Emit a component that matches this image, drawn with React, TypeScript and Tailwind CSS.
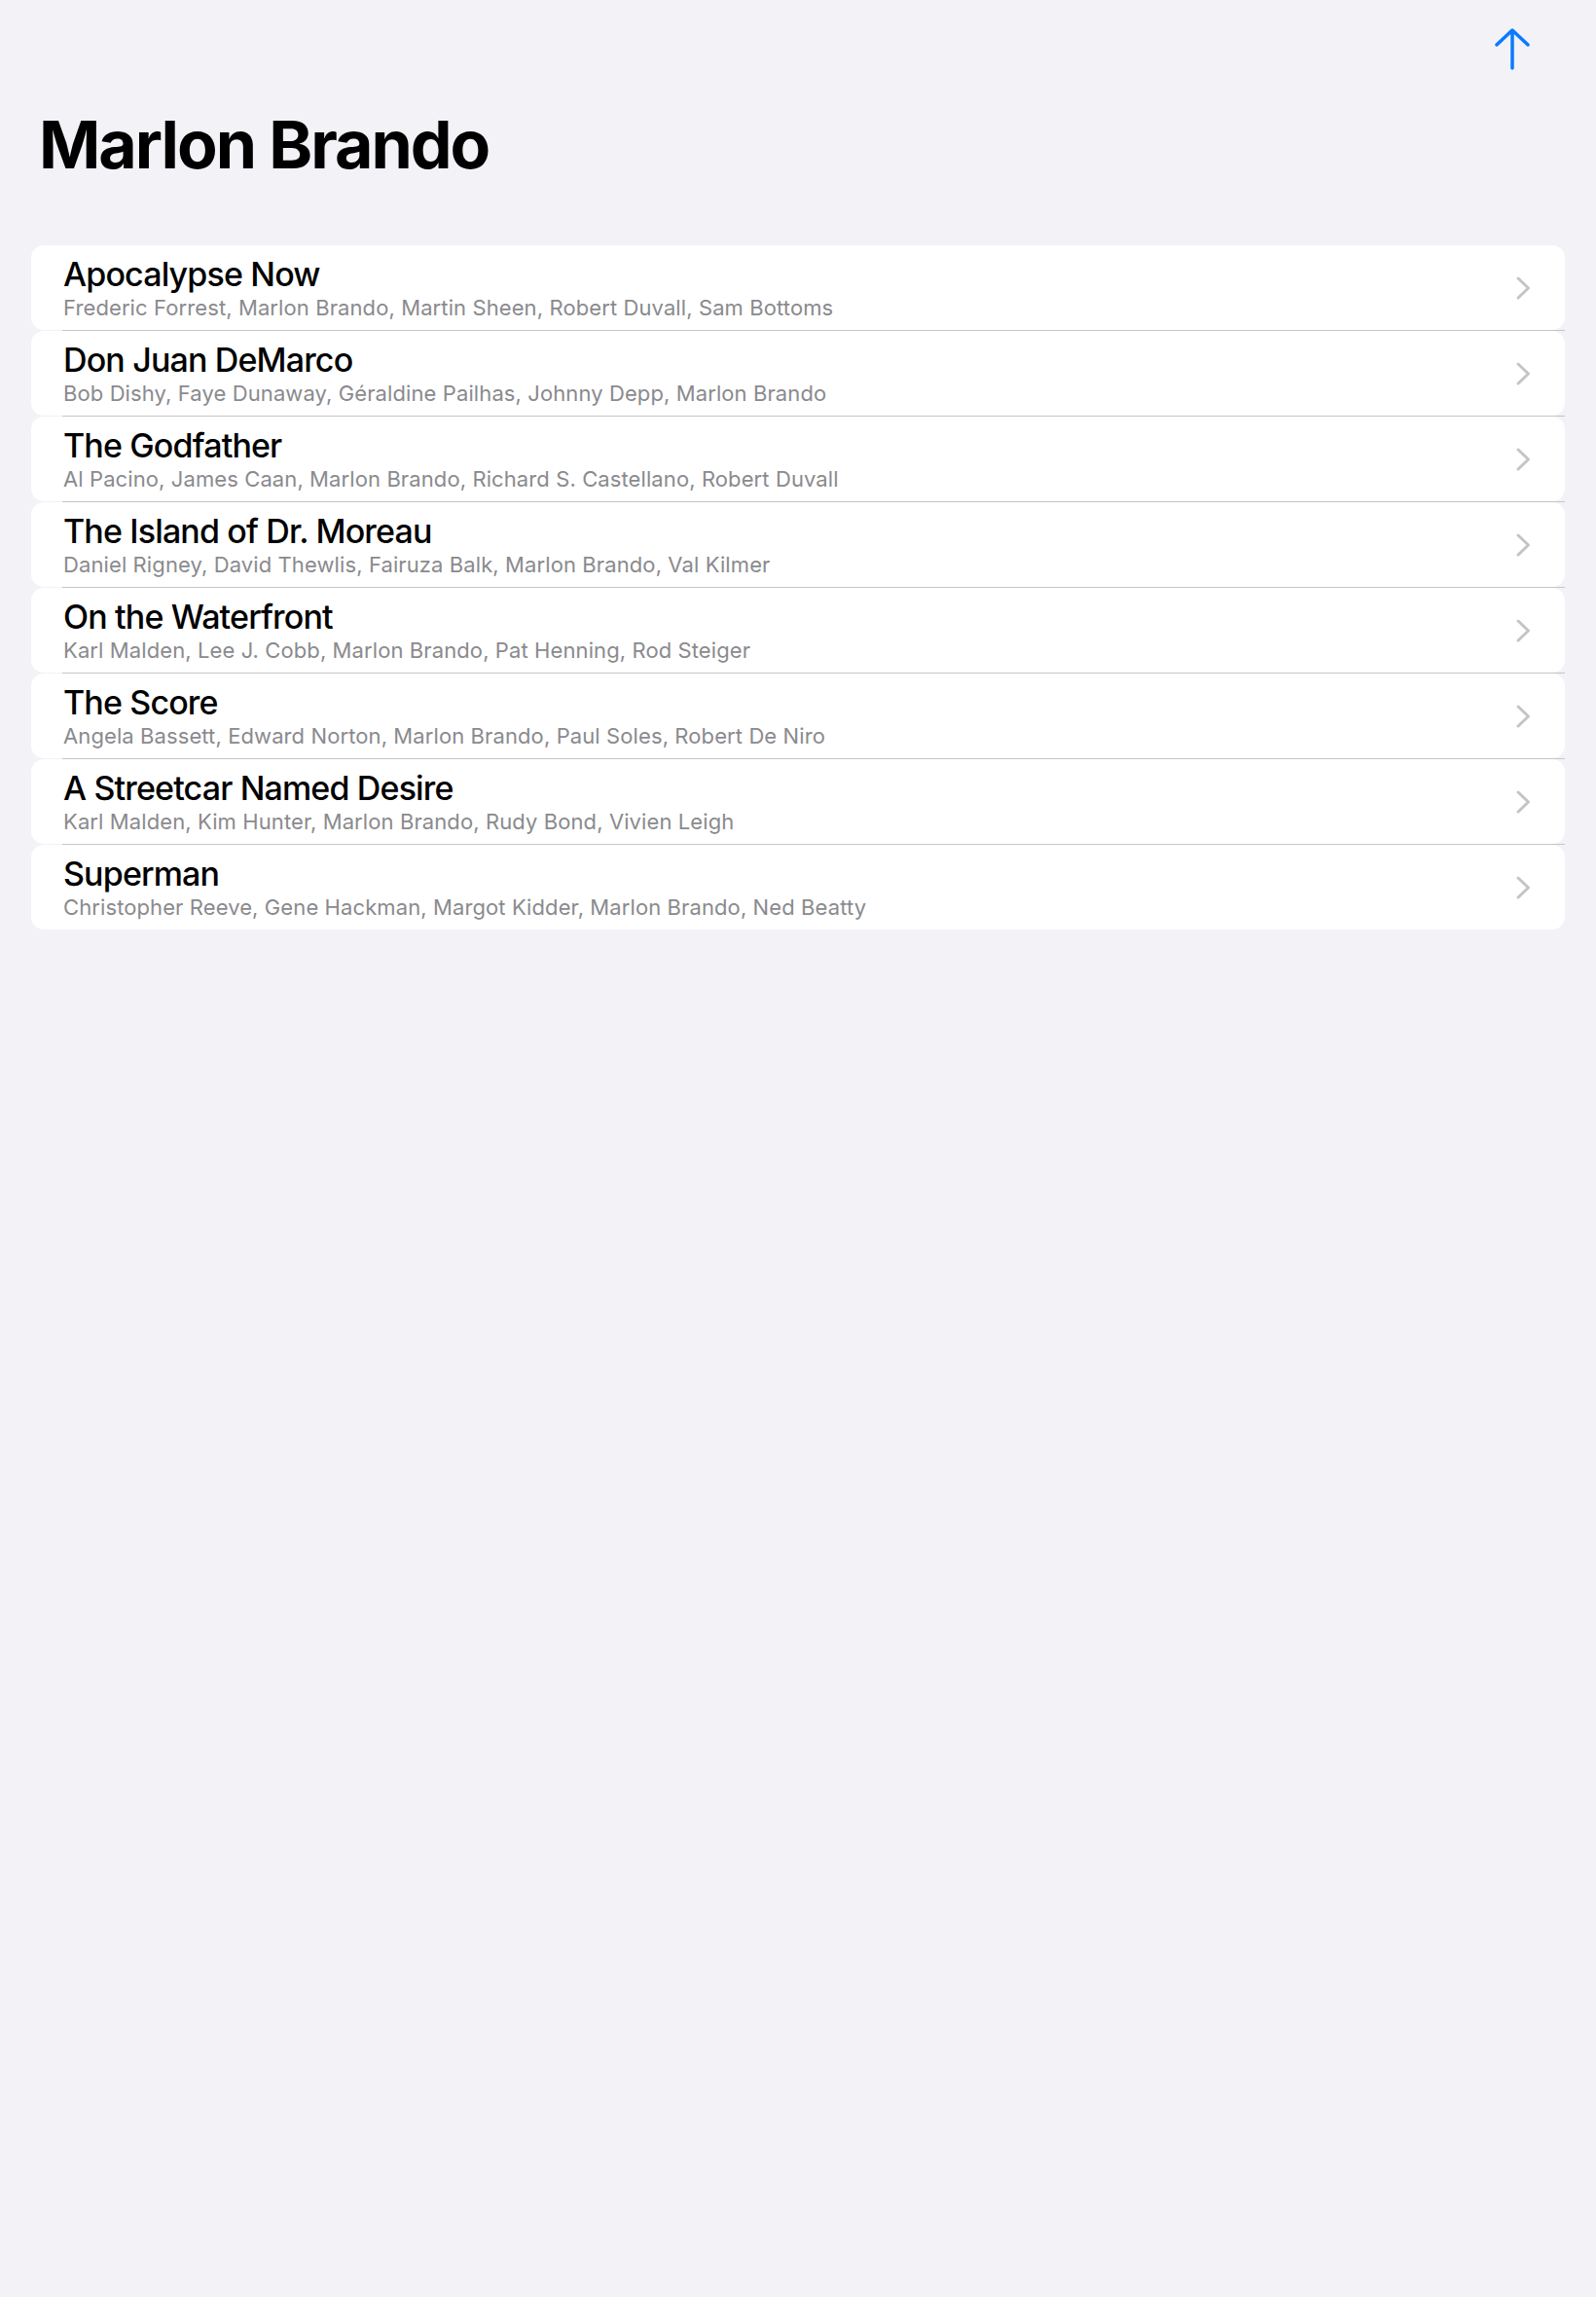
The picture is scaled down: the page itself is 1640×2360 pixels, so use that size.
const movies = [
  { title: "Apocalypse Now", cast: "Frederic Forrest, Marlon Brando, Martin Sheen, Robert Duvall, Sam Bottoms" },
  { title: "Don Juan DeMarco", cast: "Bob Dishy, Faye Dunaway, Géraldine Pailhas, Johnny Depp, Marlon Brando" },
  { title: "The Godfather", cast: "Al Pacino, James Caan, Marlon Brando, Richard S. Castellano, Robert Duvall" },
  { title: "The Island of Dr. Moreau", cast: "Daniel Rigney, David Thewlis, Fairuza Balk, Marlon Brando, Val Kilmer" },
  { title: "On the Waterfront", cast: "Karl Malden, Lee J. Cobb, Marlon Brando, Pat Henning, Rod Steiger" },
  { title: "The Score", cast: "Angela Bassett, Edward Norton, Marlon Brando, Paul Soles, Robert De Niro" },
  { title: "A Streetcar Named Desire", cast: "Karl Malden, Kim Hunter, Marlon Brando, Rudy Bond, Vivien Leigh" },
  { title: "Superman", cast: "Christopher Reeve, Gene Hackman, Margot Kidder, Marlon Brando, Ned Beatty" },
];

function UpArrow() {
  return (
    <svg width="36" height="44" viewBox="0 0 36 44" fill="none" stroke="#0a7aff" strokeWidth="3.5" strokeLinecap="round" strokeLinejoin="round">
      <path d="M18 3 V42 M2 18 L18 3 L34 18" />
    </svg>
  );
}

function Chevron() {
  return (
    <svg width="16" height="26" viewBox="0 0 16 26" fill="none" stroke="#c4c4c7" strokeWidth="3" strokeLinecap="round" strokeLinejoin="round">
      <path d="M3 3 L13.5 13 L3 23" />
    </svg>
  );
}

export default function App() {
  return (
    <div className="min-h-[2360px] bg-[#f2f2f7] font-['Inter',sans-serif] antialiased">
      <div className="h-[100px] flex justify-end items-start pt-[28px] pr-[68px]">
        <button className="p-0">
          <UpArrow />
        </button>
      </div>

      <h1 className="mt-[8px] pl-[40px] text-[68px] leading-[80px] font-bold tracking-[-2px] text-black">
        Marlon Brando
      </h1>

      <div className="mt-[64px] px-[32px]">
        {movies.map((m, i) => (
          <div key={m.title}>
            <div className="h-[87px] bg-white rounded-[13px] flex items-center pl-[33px] pr-[35px]">
              <div className="flex-1 min-w-0">
                <div className="text-[34px] leading-[40px] font-medium text-black tracking-[-0.85px]">{m.title}</div>
                <div className="text-[22px] leading-[28px] text-[#8a8a8e] tracking-[0.1px]">{m.cast}</div>
              </div>
              <Chevron />
            </div>
            {i < movies.length - 1 && <div className="ml-[32px] h-px bg-[#c6c6c8]" />}
          </div>
        ))}
      </div>
    </div>
  );
}
